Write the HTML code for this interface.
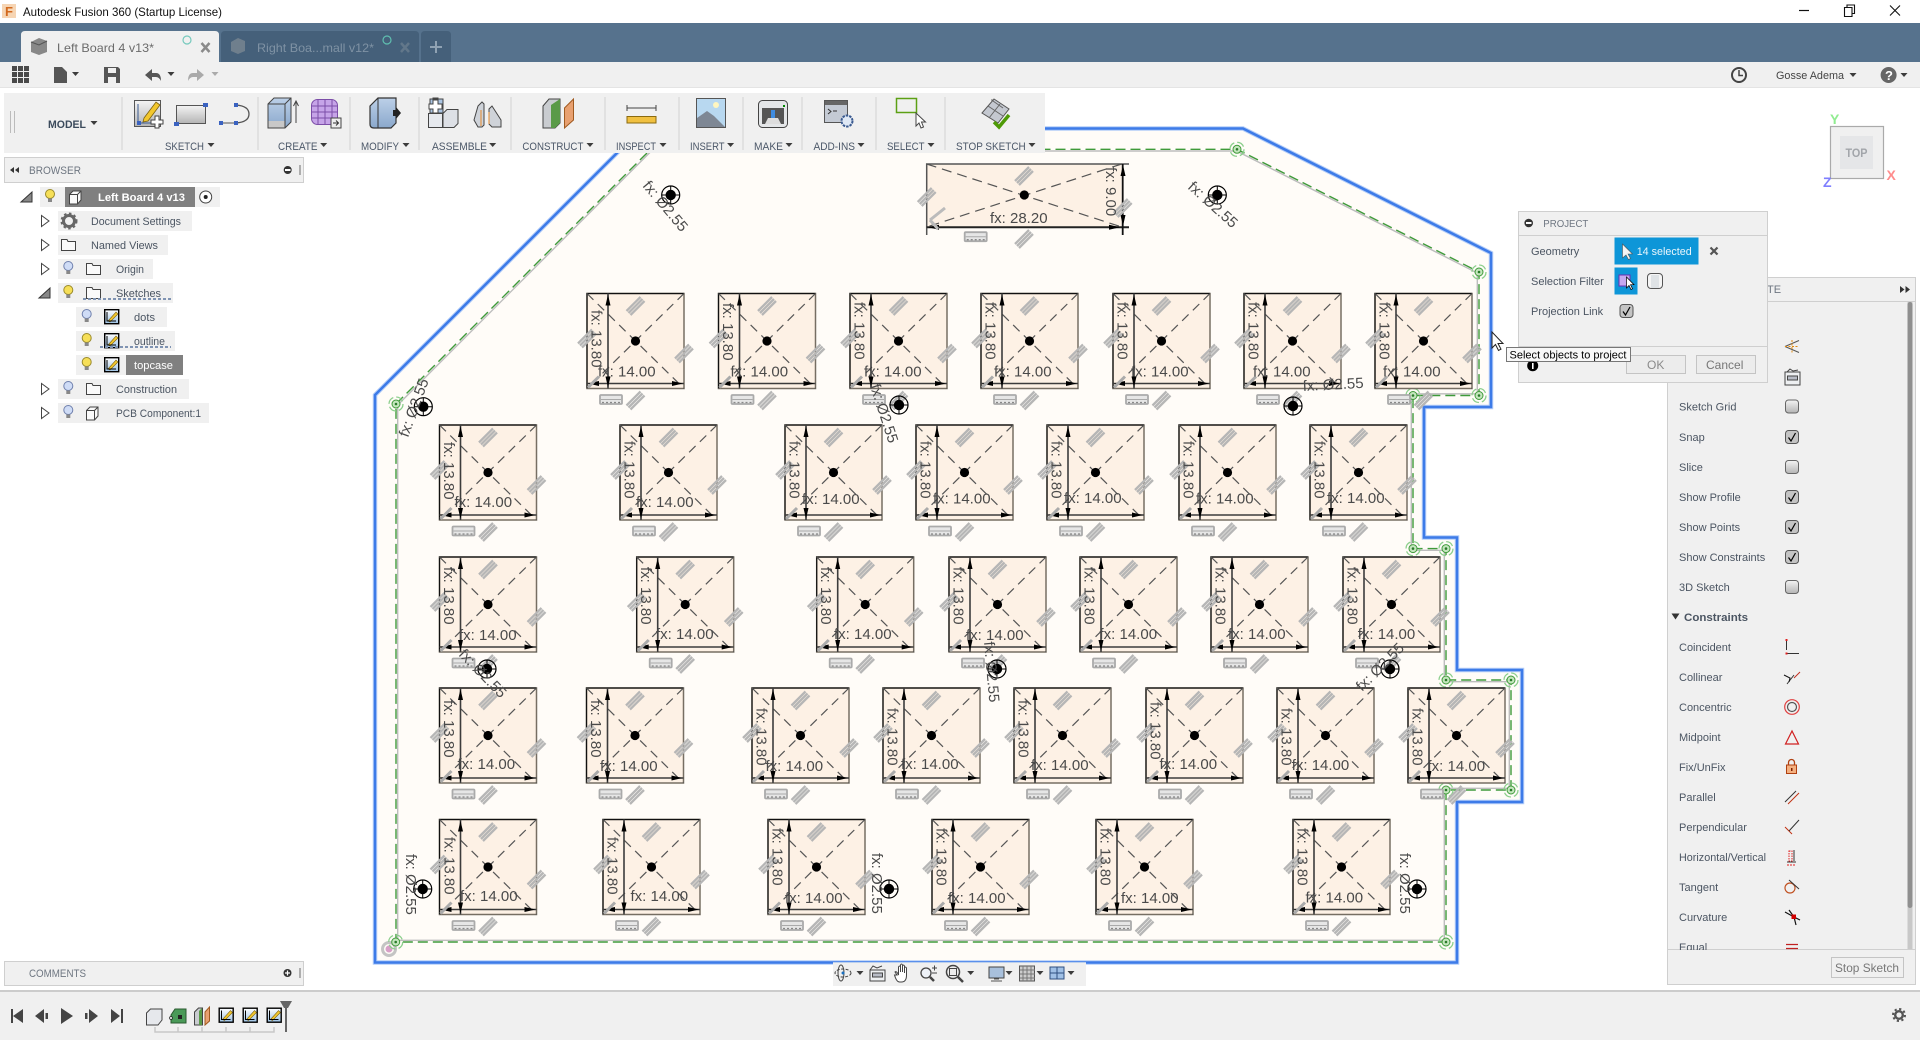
<!DOCTYPE html>
<html><head><meta charset="utf-8"><title>Autodesk Fusion 360</title>
<style>
html,body{margin:0;padding:0;background:#fff;overflow:hidden}
svg{display:block}
text{font-family:"Liberation Sans",sans-serif}
.t{font-size:11px;fill:#4b5562}
.r{font-size:11px;fill:#4b5768}
.d{font-size:15px;fill:#4a4a4a}
</style></head><body>
<svg width="1920" height="1040" viewBox="0 0 1920 1040" xmlns="http://www.w3.org/2000/svg">
<defs>
<linearGradient id="gc" x1="0" y1="0" x2="0" y2="1"><stop offset="0" stop-color="#f4f4f4"/><stop offset="1" stop-color="#b4b4b4"/></linearGradient>
<linearGradient id="gb" x1="0" y1="0" x2="0" y2="1"><stop offset="0" stop-color="#bcd0e8"/><stop offset="1" stop-color="#8aa8cc"/></linearGradient>
<linearGradient id="gs" x1="0" y1="0" x2="0" y2="1"><stop offset="0" stop-color="#fff"/><stop offset="1" stop-color="#9dc3e6"/></linearGradient>
<g id="p"><path d="M-9,5L5,-9M-7,7L7,-7M-5,9L9,-5" stroke="#b6b6b6" stroke-width="2.300" fill="none"/></g>
<g id="hz"><rect x="-11" y="-4.500" width="22" height="9" rx="1" fill="#e6e6e6" stroke="#aaa" stroke-width="1.800"/><path d="M-10,0H10" stroke="#aaa"/><path d="M-9,3h2M-5,3h2M-1,3h2M3,3h2M7,3h2" stroke="#888" stroke-width="1.300"/></g>
<g id="k">
<rect width="97" height="95" fill="#fdf1e5" stroke="#766e63" stroke-width="1.500"/>
<path d="M0,95V0H97" fill="none" stroke="#111" stroke-width="1.200"/>
<path d="M0,0L97,95M97,0L0,95" stroke="#555" stroke-width="1.200" stroke-dasharray="9 6" fill="none"/>
<circle cx="48.500" cy="47.500" r="4.600" fill="#000"/>
<path d="M21,0V95M0,90H97" stroke="#3c3c3c" stroke-width="1.600" fill="none"/>
<path d="M21,1l-2.500,11h5zM21,94l-2.500,-11h5zM96,90l-11,-2.500v5zM1,90l11,-2.500v5z" fill="#000"/>
<path d="M1,94L12,83" stroke="#aaa" stroke-width="3"/>
<use href="#p" x="48.500" y="12.500"/><use href="#p" x="0" y="45"/><use href="#p" x="97" y="60"/><use href="#p" x="48.500" y="107"/><use href="#hz" x="24" y="106"/>
</g>
<g id="h"><circle r="9" fill="none" stroke="#000" stroke-width="1.200"/><circle r="5.200" fill="#000"/><path d="M0,-9V9M-9,0H9" stroke="#000"/></g>
<g id="v"><circle r="7" fill="none" stroke="#8ccf8c" stroke-width="1.300" stroke-dasharray="8 3"/><circle r="4" fill="#c4e6bd" stroke="#3f9a3a"/><circle r="1.300" fill="#2a7a2a"/></g>
<path id="a" d="M-3.500,-2h7l-3.500,4z" fill="#3c3c3c"/>
<g id="by"><circle cy="-2" r="4.500" fill="#f6df58" stroke="#9a8a2a"/><rect x="-2" y="2.500" width="4" height="3.500" fill="#888"/></g>
<g id="bb"><circle cy="-2" r="4.500" fill="#cfdcf6" stroke="#6f80ad"/><rect x="-2" y="2.500" width="4" height="3.500" fill="#888"/></g>
<g id="f"><path d="M.5,.5H6l1,2h7.500V11.500H.5z" fill="#fafafa" stroke="#444"/></g>
<g id="sk"><rect x=".7" y=".7" width="14" height="14" fill="url(#gs)" stroke="#000" stroke-width="1.400"/><path d="M4,12L12,3l2,2L6,13z" fill="#f2c72e" stroke="#7a6010" stroke-width=".6"/><path d="M3,3V12H12" fill="none" stroke="#000"/></g>
<g id="ci"><path d="M.5,4.500L4,1H12V10L8.500,14H.5z" fill="#fafafa" stroke="#444"/><path d="M.5,4.500H8.500V14M8.500,4.500L12,1" fill="none" stroke="#444"/></g>
<g id="c0"><rect width="13" height="13" rx="3" fill="url(#gc)" stroke="#666"/></g>
<g id="c1"><rect width="13" height="13" rx="3" fill="#c4c4c4" stroke="#555"/><path d="M3,7l2.500,3.500L10,2.500" fill="none" stroke="#000" stroke-width="1.200"/></g>
<path id="t1" d="M.5,0V11L8,5.500z" fill="#fff" stroke="#444"/>
<path id="t2" d="M11,0V10H0z" fill="#888" stroke="#333"/>
</defs>

<rect width="1920" height="1040" fill="#fff"/>

<!-- canvas sketch -->
<path d="M375,395L641.500,128.500H1243L1491,253V407H1424V537.500H1457V670H1522V802H1457V962.500H375z" fill="#fffcf8" stroke="#b4cdf8" stroke-width="4.500"/>
<path d="M375,395L641.500,128.500H1243L1491,253V407H1424V537.500H1457V670H1522V802H1457V962.500H375z" fill="none" stroke="#3d7be8" stroke-width="2.500"/>
<path d="M397.700,405L651.400,151H1236.600L1477.300,273V393.800H1411.300V550.300H1444.300V681.700H1509.300V788.300H1444.300V940.300H397.700z" fill="none" stroke="#bdbdbd" stroke-width="1.400"/>
<path d="M396,404L650.700,149.300H1237L1479,272V395.500H1413V548.600H1446V680H1511V790H1446V942H396z" fill="none" stroke="#3f9a3a" stroke-width="1.400" stroke-dasharray="10 5"/>

<use href="#v" x="396" y="404"/><use href="#v" x="1237" y="149.300"/><use href="#v" x="1479" y="272"/><use href="#v" x="1479" y="395.500"/><use href="#v" x="1413" y="395.500"/><use href="#v" x="1413" y="548.600"/><use href="#v" x="1446" y="548.600"/><use href="#v" x="1446" y="680"/><use href="#v" x="1511" y="680"/><use href="#v" x="1511" y="790"/><use href="#v" x="1446" y="790"/><use href="#v" x="1446" y="942"/>
<circle cx="389" cy="949" r="6.500" fill="none" stroke="#c4c4c4" stroke-width="3"/><circle cx="389" cy="949" r="3.500" fill="#d8a0c8"/><use href="#v" x="395.700" y="942"/>

<!-- top rect -->
<rect x="926.700" y="164" width="195" height="63" fill="#fdf1e5"/>
<path d="M926.700,235V164H1129" fill="none" stroke="#555" stroke-width="1.500"/>
<path d="M926.700,164L1121.700,227M1121.700,164L926.700,227" stroke="#555" stroke-width="1.200" stroke-dasharray="10 6"/>
<path d="M926.700,227.300H1129" stroke="#222" stroke-width="2"/><path d="M1122.700,164V235" stroke="#111" stroke-width="1.800"/>
<path d="M928,227.300l11,-2.500v5zM1120,227.300l-11,-2.500v5zM1123,165l-2.500,11h5zM1123,226l-2.500,-11h5z" fill="#000"/>
<circle cx="1024.300" cy="195" r="4.600" fill="#000"/>
<use href="#p" x="1024" y="176"/><use href="#p" x="926.700" y="197"/><use href="#p" x="1122.700" y="208"/><use href="#p" x="1024" y="239"/><use href="#hz" x="975.700" y="236.700"/>
<path d="M930,220L945,208M930,220L938,229" stroke="#bbb" stroke-width="3"/>
<text class="d" x="990" y="223">fx: 28.20</text>
<text class="d" transform="translate(1106,167) rotate(90)">fx: 9.00</text>

<!-- Row 1 -->
<use href="#k" x="587" y="293.500"/><use href="#k" x="718.500" y="293.500"/><use href="#k" x="850" y="293.500"/><use href="#k" x="981" y="293.500"/><use href="#k" x="1113" y="293.500"/><use href="#k" x="1244" y="293.500"/><use href="#k" x="1375" y="293.500"/>
<!-- Row 2 -->
<use href="#k" x="439.500" y="425"/><use href="#k" x="620" y="425"/><use href="#k" x="785" y="425"/><use href="#k" x="916" y="425"/><use href="#k" x="1047" y="425"/><use href="#k" x="1179" y="425"/><use href="#k" x="1310" y="425"/>
<!-- Row 3 -->
<use href="#k" x="439.500" y="557"/><use href="#k" x="636.700" y="557"/><use href="#k" x="816.700" y="557"/><use href="#k" x="949" y="557"/><use href="#k" x="1080" y="557"/><use href="#k" x="1211" y="557"/><use href="#k" x="1343" y="557"/>
<!-- Row 4 -->
<use href="#k" x="439.500" y="688"/><use href="#k" x="586.500" y="688"/><use href="#k" x="752" y="688"/><use href="#k" x="883" y="688"/><use href="#k" x="1014" y="688"/><use href="#k" x="1146" y="688"/><use href="#k" x="1277" y="688"/><use href="#k" x="1408" y="688"/>
<!-- Row 5 -->
<use href="#k" x="439.500" y="819.500"/><use href="#k" x="603" y="819.500"/><use href="#k" x="768" y="819.500"/><use href="#k" x="932" y="819.500"/><use href="#k" x="1096" y="819.500"/><use href="#k" x="1293" y="819.500"/>

<!-- Labels row 1 -->
<text class="d" x="598" y="376.500">fx: 14.00</text><text class="d" transform="translate(591.500,310) rotate(90)">fx: 13.80</text>
<text class="d" x="730.500" y="376.500">fx: 14.00</text><text class="d" transform="translate(723,303) rotate(90)">fx: 13.80</text>
<text class="d" x="864" y="376.500">fx: 14.00</text><text class="d" transform="translate(854.500,302) rotate(90)">fx: 13.80</text>
<text class="d" x="994" y="376.500">fx: 14.00</text><text class="d" transform="translate(985.500,302) rotate(90)">fx: 13.80</text>
<text class="d" x="1131" y="376.500">fx: 14.00</text><text class="d" transform="translate(1117.500,302) rotate(90)">fx: 13.80</text>
<text class="d" x="1253" y="376.500">fx: 14.00</text><text class="d" transform="translate(1248.500,302) rotate(90)">fx: 13.80</text>
<text class="d" x="1383" y="376.500">fx: 14.00</text><text class="d" transform="translate(1379.500,302) rotate(90)">fx: 13.80</text>
<!-- Labels row 2 -->
<text class="d" x="454.500" y="507">fx: 14.00</text><text class="d" transform="translate(444,442) rotate(90)">fx: 13.80</text>
<text class="d" x="636" y="507">fx: 14.00</text><text class="d" transform="translate(624.500,441) rotate(90)">fx: 13.80</text>
<text class="d" x="802" y="504">fx: 14.00</text><text class="d" transform="translate(789.500,441) rotate(90)">fx: 13.80</text>
<text class="d" x="933" y="503.500">fx: 14.00</text><text class="d" transform="translate(920.500,441) rotate(90)">fx: 13.80</text>
<text class="d" x="1064" y="503">fx: 14.00</text><text class="d" transform="translate(1051.500,441) rotate(90)">fx: 13.80</text>
<text class="d" x="1196" y="503.500">fx: 14.00</text><text class="d" transform="translate(1183.500,441) rotate(90)">fx: 13.80</text>
<text class="d" x="1327" y="503">fx: 14.00</text><text class="d" transform="translate(1314.500,441) rotate(90)">fx: 13.80</text>
<!-- Labels row 3 -->
<text class="d" x="459" y="640">fx: 14.00</text><text class="d" transform="translate(444,567) rotate(90)">fx: 13.80</text>
<text class="d" x="656" y="639">fx: 14.00</text><text class="d" transform="translate(641,567) rotate(90)">fx: 13.80</text>
<text class="d" x="834" y="639">fx: 14.00</text><text class="d" transform="translate(821,567) rotate(90)">fx: 13.80</text>
<text class="d" x="966" y="640">fx: 14.00</text><text class="d" transform="translate(953.500,567) rotate(90)">fx: 13.80</text>
<text class="d" x="1099.500" y="639">fx: 14.00</text><text class="d" transform="translate(1084.500,567) rotate(90)">fx: 13.80</text>
<text class="d" x="1228" y="639">fx: 14.00</text><text class="d" transform="translate(1215.500,567) rotate(90)">fx: 13.80</text>
<text class="d" x="1357.700" y="639">fx: 14.00</text><text class="d" transform="translate(1347.500,567) rotate(90)">fx: 13.80</text>
<!-- Labels row 4 -->
<text class="d" x="457.500" y="769">fx: 14.00</text><text class="d" transform="translate(444,700) rotate(90)">fx: 13.80</text>
<text class="d" x="600" y="771">fx: 14.00</text><text class="d" transform="translate(591,700) rotate(90)">fx: 13.80</text>
<text class="d" x="765.500" y="771">fx: 14.00</text><text class="d" transform="translate(756.500,708) rotate(90)">fx: 13.80</text>
<text class="d" x="901" y="769">fx: 14.00</text><text class="d" transform="translate(887.500,708) rotate(90)">fx: 13.80</text>
<text class="d" x="1031" y="770">fx: 14.00</text><text class="d" transform="translate(1018.500,700) rotate(90)">fx: 13.80</text>
<text class="d" x="1159.500" y="769">fx: 14.00</text><text class="d" transform="translate(1150.500,702) rotate(90)">fx: 13.80</text>
<text class="d" x="1291.700" y="770">fx: 14.00</text><text class="d" transform="translate(1281.500,708) rotate(90)">fx: 13.80</text>
<text class="d" x="1427.500" y="771">fx: 14.00</text><text class="d" transform="translate(1412.500,708) rotate(90)">fx: 13.80</text>
<!-- Labels row 5 -->
<text class="d" x="460" y="901">fx: 14.00</text><text class="d" transform="translate(444.500,837) rotate(90)">fx: 13.80</text>
<text class="d" x="630.500" y="901">fx: 14.00</text><text class="d" transform="translate(607.500,837) rotate(90)">fx: 13.80</text>
<text class="d" x="785" y="903">fx: 14.00</text><text class="d" transform="translate(772.500,828) rotate(90)">fx: 13.80</text>
<text class="d" x="948" y="903">fx: 14.00</text><text class="d" transform="translate(936.500,828) rotate(90)">fx: 13.80</text>
<text class="d" x="1121" y="903">fx: 14.00</text><text class="d" transform="translate(1100.500,828) rotate(90)">fx: 13.80</text>
<text class="d" x="1305.500" y="902.500">fx: 14.00</text><text class="d" transform="translate(1297.500,828) rotate(90)">fx: 13.80</text>

<!-- Holes -->
<use href="#h" x="670.700" y="195"/><text class="d" transform="translate(642,186) rotate(50)">fx: Ø2.55</text>
<use href="#h" x="1217.300" y="195"/><text class="d" transform="translate(1187,188) rotate(42)">fx: Ø2.55</text>
<use href="#h" x="423.300" y="406.700"/><text class="d" transform="translate(408,438) rotate(-70)">fx: Ø2.55</text>
<use href="#h" x="899" y="405"/><text class="d" transform="translate(870,386) rotate(72)">fx: Ø2.55</text>
<use href="#h" x="1293" y="406"/><text class="d" transform="translate(1303,391) rotate(-3)">fx: Ø2.55</text>
<use href="#h" x="487" y="669"/><text class="d" transform="translate(458,655) rotate(46)">fx: Ø2.55</text>
<use href="#h" x="997" y="669"/><text class="d" transform="translate(984,642) rotate(85)">fx: Ø2.55</text>
<use href="#h" x="1390" y="669"/><text class="d" transform="translate(1362,692) rotate(-45)">fx: Ø2.55</text>
<use href="#h" x="422.700" y="889"/><text class="d" transform="translate(406,854) rotate(90)">fx: Ø2.55</text>
<use href="#h" x="889" y="889"/><text class="d" transform="translate(872,853) rotate(90)">fx: Ø2.55</text>
<use href="#h" x="1417" y="889"/><text class="d" transform="translate(1400,853) rotate(90)">fx: Ø2.55</text>

<!-- Title bar -->
<rect x="2" y="4" width="14" height="14" fill="#f6d5b4"/><text x="5" y="16" style="font-size:13px;font-weight:bold;fill:#d2691e">F</text>
<text x="23" y="16" style="font-size:12px;fill:#111" textLength="199" lengthAdjust="spacingAndGlyphs">Autodesk Fusion 360 (Startup License)</text>
<path d="M1799,10.500H1809" stroke="#111" stroke-width="1.200"/>
<path d="M1844.500,7.500h7.500v9h-7.500zM1847,7.500v-2.500h7.500v8.500h-2.500" fill="none" stroke="#111" stroke-width="1.100"/>
<path d="M1890,5.500L1900,15.500M1900,5.500L1890,15.500" stroke="#111" stroke-width="1.100"/>

<!-- Tabs -->
<rect y="23" width="1920" height="39" fill="#56728d"/>
<path d="M21,62V35q0,-4 4,-4H215q4,0 4,4V62z" fill="#f0f0f0"/>
<path d="M221,62V35q0,-4 4,-4H415q4,0 4,4V62z" fill="#45607a"/>
<path d="M421,62V35q0,-4 4,-4H447q4,0 4,4V62z" fill="#45607a"/>
<path d="M31,42l8,-4 8,3v11l-8,3 -8,-3z" fill="#888"/><path d="M31,42l8,3 8,-4" stroke="#555" fill="none"/>
<path d="M231,42l7,-4 7,3v10l-7,3 -7,-3z" fill="#6f7f8d"/>
<text x="57" y="52" style="font-size:12px;fill:#6b6b6b" textLength="97" lengthAdjust="spacingAndGlyphs">Left Board 4 v13*</text>
<text x="257" y="52" style="font-size:12px;fill:#7f92a4" textLength="117" lengthAdjust="spacingAndGlyphs">Right Boa...mall v12*</text>
<circle cx="187" cy="40" r="4" fill="none" stroke="#75c9bd" stroke-width="1.200"/>
<circle cx="387" cy="40" r="4" fill="none" stroke="#5fbfb0" stroke-width="1.200"/>
<path d="M201.500,43l8,9M209.500,43l-8,9" stroke="#8a8a8a" stroke-width="2.500"/>
<path d="M401,43l8,9M409,43l-8,9" stroke="#62778a" stroke-width="2.500"/>
<path d="M436,41v12M430,47h12" stroke="#8fa2b3" stroke-width="2"/>

<!-- Quick toolbar -->
<rect y="62" width="1920" height="26" fill="#f0f0f0"/><rect y="87" width="1920" height="1" fill="#e4e4e4"/>
<path d="M12,66h5v5h-5zM18,66h5v5h-5zM24,66h5v5h-5zM12,72h5v5h-5zM18,72h5v5h-5zM24,72h5v5h-5zM12,78h5v5h-5zM18,78h5v5h-5zM24,78h5v5h-5z" fill="#4a4a4a"/>
<path d="M54,67h8l5,5v11h-13z" fill="#555"/><use href="#a" x="75.500" y="74"/>
<path d="M104,67h14l2,2v14h-16z" fill="#555"/><rect x="108" y="68" width="8" height="5" fill="#f0f0f0"/><rect x="108" y="77" width="8" height="6" fill="#f0f0f0"/>
<path d="M145,75l7,-6v4h4q5,0 5,8q-2,-4 -5,-4h-4v4z" fill="#555"/><use href="#a" x="171" y="74"/>
<path d="M204,75l-7,-6v4h-4q-5,0 -5,8q2,-4 5,-4h4v4z" fill="#a9a9a9"/><path d="M-3.500,-2h7l-3.500,4z" transform="translate(215,74)" fill="#aaa"/>
<circle cx="1739" cy="75" r="7" fill="none" stroke="#444" stroke-width="2"/><path d="M1739,70v5.500h4" fill="none" stroke="#444" stroke-width="1.500"/>
<text x="1776" y="79" style="font-size:11px;fill:#444" textLength="68" lengthAdjust="spacingAndGlyphs">Gosse Adema</text><use href="#a" x="1853" y="75"/>
<circle cx="1888.600" cy="75" r="8" fill="#666"/><text x="1885" y="80" style="font-size:13px;font-weight:bold;fill:#fff">?</text><use href="#a" x="1904" y="75"/>

<!-- Ribbon -->
<rect x="4" y="93" width="1041" height="60" fill="#f0f0f0"/>
<path d="M10.500,111V133M14.500,111V133" stroke="#bbb"/>
<path d="M122,97V150M258,97V150M350,97V150M419,97V150M511,97V150M605,97V150M679,97V150M743,97V150M802,97V150M876,97V150M945,97V150" stroke="#dcdcdc" stroke-width="1.500"/>
<text x="48" y="128" style="font-size:11px;font-weight:bold;fill:#3b4a5c" textLength="38" lengthAdjust="spacingAndGlyphs">MODEL</text><use href="#a" x="94" y="123"/>
<text class="r" x="165" y="150" textLength="39" lengthAdjust="spacingAndGlyphs">SKETCH</text><use href="#a" x="211" y="145"/>
<text class="r" x="278" y="150" textLength="39.500" lengthAdjust="spacingAndGlyphs">CREATE</text><use href="#a" x="323.700" y="145"/>
<text class="r" x="361" y="150" textLength="38" lengthAdjust="spacingAndGlyphs">MODIFY</text><use href="#a" x="406" y="145"/>
<text class="r" x="432" y="150" textLength="55" lengthAdjust="spacingAndGlyphs">ASSEMBLE</text><use href="#a" x="492.700" y="145"/>
<text class="r" x="522.400" y="150" textLength="61" lengthAdjust="spacingAndGlyphs">CONSTRUCT</text><use href="#a" x="590" y="145"/>
<text class="r" x="616" y="150" textLength="40" lengthAdjust="spacingAndGlyphs">INSPECT</text><use href="#a" x="663" y="145"/>
<text class="r" x="690" y="150" textLength="34.500" lengthAdjust="spacingAndGlyphs">INSERT</text><use href="#a" x="730.600" y="145"/>
<text class="r" x="754" y="150" textLength="29" lengthAdjust="spacingAndGlyphs">MAKE</text><use href="#a" x="789" y="145"/>
<text class="r" x="813.500" y="150" textLength="41.500" lengthAdjust="spacingAndGlyphs">ADD-INS</text><use href="#a" x="861" y="145"/>
<text class="r" x="887" y="150" textLength="37.500" lengthAdjust="spacingAndGlyphs">SELECT</text><use href="#a" x="931" y="145"/>
<text class="r" x="956" y="150" textLength="69.700" lengthAdjust="spacingAndGlyphs">STOP SKETCH</text><use href="#a" x="1032" y="145"/>

<!-- ribbon icons -->
<rect x="134.500" y="100.500" width="26" height="26" fill="url(#gc)" stroke="#555"/>
<path d="M138,104V123H156" fill="none" stroke="#3a5a90"/><rect x="137" y="121" width="4" height="4" fill="#3a62c0"/>
<path d="M144,118L156,102l4,3L148,121l-5,1z" fill="#f2c72e" stroke="#7a6010" stroke-width=".8"/>
<path d="M151,120h4v-4h4v4h4v4h-4v4h-4v-4h-4z" fill="#fff" stroke="#444"/>
<rect x="176.500" y="105.500" width="29" height="18" fill="url(#gc)" stroke="#555"/><path d="M174,122h5v4h-5zM203,103h5v4h-5z" fill="#3a62c0"/>
<path d="M220,123H236" stroke="#555"/><path d="M236,105Q249,106 249,114T236,123" fill="none" stroke="#555" stroke-width="1.300"/><path d="M219,121h4v4h-4zM234,121h4v4h-4zM234,103h4v4h-4z" fill="#3a62c0"/>
<path d="M268,104l6,-6h17v24l-6,6h-17z" fill="url(#gb)" stroke="#444"/><path d="M268,104h17v24M285,104l6,-6" fill="none" stroke="#444"/><rect x="268.500" y="121" width="16" height="6.500" fill="#c8c8c8"/>
<path d="M296,123V102M293.500,106l2.500,-5 2.500,5" fill="none" stroke="#444"/>
<rect x="311.500" y="99.500" width="26" height="25" rx="6" fill="#c6a4e8" stroke="#7c4ea8"/><path d="M318,100V124M325,100V124M332,100V124M312,106H337M312,112H337M312,118H337" stroke="#7c4ea8"/>
<rect x="331" y="118" width="10" height="10" fill="#eee" stroke="#444"/><path d="M333,123h5M336,120.500l2.500,2.500 -2.500,2.500" fill="none" stroke="#333"/>
<path d="M370,106l8,-8h18v25l-5,5h-17q-4,0 -4,-4z" fill="url(#gb)" stroke="#333" stroke-width="1.200"/><path d="M378,98V128" stroke="#333"/><path d="M393,110h3v-3l5,6 -5,6v-3h-3z" fill="#222"/>
<rect x="428.500" y="113.500" width="14" height="14" fill="#e6e9ee" stroke="#444"/><path d="M443,113.500l4,-4h11v14l-4,4h-11z" fill="#dde0e6" stroke="#444"/><path d="M430,99h13v14h-13z" fill="#aac4e2" stroke="#444"/><path d="M433,99h5v-1h-5zM429,104h4v-4h5v4h4v5h-4v4h-5v-4h-4z" fill="#fff" stroke="#444"/>
<path d="M474,120l4,-14 4,-4 2,2v21l-2,2h-4zM492,127l-3,-3V109l3,-3 9,14v7z" fill="#cfd3d9" stroke="#444"/><path d="M481,110v16M489,112v12" stroke="#e58a2a"/>
<path d="M543,106l6,-7h11v24l-5,5h-12z" fill="#c9ccd0" stroke="#444"/><path d="M551,105l9,-6v24l-5,5h-4z" fill="#5a9a48"/>
<path d="M564.500,108l9,-9v21l-9,8z" fill="#e8a070" stroke="#a05a20"/>
<path d="M627,108H656M627,105v6M656,105v6" stroke="#444"/><rect x="627" y="116.500" width="29" height="6.500" fill="#f0c040" stroke="#8a6a10"/>
<rect x="696.500" y="98.500" width="29" height="29" fill="#b8d8f0" stroke="#555"/><path d="M697,127V118l10,-7 7,5 11,11z" fill="#7e8794"/><circle cx="716" cy="105" r="3" fill="#fff6c0"/>
<rect x="758.500" y="100.500" width="29" height="27" rx="4" fill="#e4e6e8" stroke="#444"/><rect x="762" y="108" width="22" height="16" fill="#555"/><rect x="771" y="110" width="4" height="8" fill="#3f8ce0"/><path d="M765,124l3,-6h10l3,6z" fill="#ddd"/><rect x="783" y="105" width="2" height="2" fill="#080"/>
<rect x="824.500" y="100.500" width="23" height="22" fill="#c4cad4" stroke="#555"/><rect x="825" y="101" width="22" height="4" fill="#666"/><path d="M828,109l3,2.500 -3,2.500M833,111h4" fill="none" stroke="#333"/><circle cx="847" cy="121" r="5.500" fill="#dfe8f5" stroke="#3a5a90" stroke-width="2" stroke-dasharray="2.500 1"/>
<rect x="896.500" y="98.500" width="20" height="14" fill="none" stroke="#5ca014" stroke-width="1.500"/>
<path d="M916,113v13l3,-3 2,5 2.500,-1 -2,-5h4z" fill="#fff" stroke="#444"/>
<path d="M982,113l12,-14 15,10 -11,14z" fill="#c4c8d0" stroke="#555"/><path d="M988,106l15,10M994,100l-3,0M1000,104l-11,14M993,101l10,7" stroke="#666"/>
<path d="M994,122l5,5 10,-12" fill="none" stroke="#4e9a06" stroke-width="3.500"/>

<!-- Browser -->
<rect x="4.500" y="157.500" width="299" height="25" fill="#f0f0f0" stroke="#cfcfcf"/>
<path d="M14,167v6l-4,-3zM19,167v6l-4,-3z" fill="#333"/>
<text x="29" y="174" style="font-size:11px;fill:#6e7681" textLength="52" lengthAdjust="spacingAndGlyphs">BROWSER</text>
<circle cx="287.700" cy="170" r="4" fill="#333"/><rect x="285" y="169" width="5.500" height="2" fill="#fff"/><path d="M300,165V175" stroke="#999" stroke-width="1.500"/>
<g fill="#f0f0f0"><rect x="40" y="187" width="180" height="20"/><rect x="58" y="211" width="134" height="20"/><rect x="58" y="235" width="110" height="20"/><rect x="58" y="259" width="95" height="20"/><rect x="58" y="283" width="115" height="20"/><rect x="76" y="307" width="91" height="20"/><rect x="76" y="331" width="99" height="20"/><rect x="76" y="355" width="107" height="20"/><rect x="58" y="379" width="131" height="20"/><rect x="58" y="403" width="151" height="20"/></g>
<rect x="65" y="187" width="130" height="20" fill="#808080"/><rect x="126" y="355" width="57" height="20" fill="#808080"/>
<use href="#t2" x="21" y="192"/><use href="#t1" x="41" y="215.500"/><use href="#t1" x="41" y="239.500"/><use href="#t1" x="41" y="263.500"/><use href="#t2" x="39" y="288"/><use href="#t1" x="41" y="383.500"/><use href="#t1" x="41" y="407.500"/>
<use href="#by" x="50" y="196"/><use href="#ci" x="69" y="190"/>
<circle cx="205.700" cy="197" r="6" fill="#fff" stroke="#444"/><circle cx="205.700" cy="197" r="2" fill="#222"/>
<circle cx="69" cy="221" r="5.500" fill="none" stroke="#666" stroke-width="3"/><circle cx="69" cy="221" r="7.500" fill="none" stroke="#666" stroke-width="2" stroke-dasharray="2.500 2.500"/>
<use href="#f" x="61" y="239"/><use href="#bb" x="68.300" y="268"/><use href="#f" x="86" y="263"/><use href="#by" x="68.300" y="292"/><use href="#f" x="86" y="287"/>
<use href="#bb" x="86.700" y="316"/><use href="#sk" x="104" y="309"/><use href="#by" x="86.700" y="340"/><use href="#sk" x="104" y="333"/><use href="#by" x="86.700" y="364"/><use href="#sk" x="104" y="357"/>
<use href="#bb" x="68.300" y="388"/><use href="#f" x="86" y="383"/><use href="#bb" x="68.300" y="412"/><use href="#ci" x="86" y="406"/>
<path d="M83,299H172M100,347H171" stroke="#7f93b2" stroke-width="2" stroke-dasharray="3 2"/>
<text x="98" y="201" style="font-size:11px;font-weight:bold;fill:#fff" textLength="87" lengthAdjust="spacingAndGlyphs">Left Board 4 v13</text>
<text class="t" x="91" y="225" textLength="90" lengthAdjust="spacingAndGlyphs">Document Settings</text>
<text class="t" x="91" y="249" textLength="67" lengthAdjust="spacingAndGlyphs">Named Views</text>
<text class="t" x="116" y="273" textLength="28" lengthAdjust="spacingAndGlyphs">Origin</text>
<text class="t" x="116" y="297" textLength="45" lengthAdjust="spacingAndGlyphs">Sketches</text>
<text class="t" x="134" y="321" textLength="21" lengthAdjust="spacingAndGlyphs">dots</text>
<text class="t" x="134" y="345" textLength="31" lengthAdjust="spacingAndGlyphs">outline</text>
<text x="134" y="369" style="font-size:11px;fill:#fff" textLength="39" lengthAdjust="spacingAndGlyphs">topcase</text>
<text class="t" x="116" y="393" textLength="61" lengthAdjust="spacingAndGlyphs">Construction</text>
<text class="t" x="116" y="417" textLength="85" lengthAdjust="spacingAndGlyphs">PCB Component:1</text>

<!-- Comments -->
<rect x="4.500" y="961.500" width="299" height="24" fill="#f0f0f0" stroke="#cfcfcf"/>
<text x="29" y="977" style="font-size:11px;fill:#6e7681" textLength="57" lengthAdjust="spacingAndGlyphs">COMMENTS</text>
<circle cx="287.500" cy="973" r="4" fill="#333"/><path d="M285,973h5M287.500,970.500v5" stroke="#fff" stroke-width="1.200"/><path d="M300,968V978" stroke="#999" stroke-width="1.500"/>

<!-- Nav cube -->
<rect x="1830.500" y="126.500" width="53" height="52" fill="#f0f0f0" stroke="#aaa" stroke-width="1.200"/>
<rect x="1840" y="136" width="33" height="33" fill="#e5e6e8"/>
<text x="1845.500" y="157" style="font-size:12px;font-weight:bold;fill:#a2a5aa" textLength="22" lengthAdjust="spacingAndGlyphs">TOP</text>
<text x="1830" y="124" style="font-size:14px;font-weight:bold;fill:#90ec90">Y</text>
<text x="1886.500" y="180" style="font-size:14px;font-weight:bold;fill:#ff8c8c">X</text>
<text x="1823" y="187" style="font-size:14px;font-weight:bold;fill:#7f7fff">Z</text>

<!-- Palette -->
<rect x="1667.500" y="277.500" width="248" height="707" fill="#f0f0f0" stroke="#cfcfcf"/>
<path d="M1668,301.500H1915M1668,949.500H1915" stroke="#cfcfcf"/>
<text x="1767" y="293" style="font-size:11px;fill:#6e7681">TE</text>
<path d="M1900,286v7l4.500,-3.500zM1905.500,286v7l4.500,-3.500z" fill="#333"/>
<rect x="1907.500" y="302" width="5" height="647" fill="#c8c8c8"/><rect x="1907.500" y="302" width="5" height="606" rx="2.500" fill="#8f8f8f"/>
<path d="M1785,346.500l14,-6M1785,346.500l14,6" stroke="#555" fill="none"/><path d="M1785,346.500h14M1792,340v13" stroke="#e08a10" stroke-dasharray="2 1.500" fill="none"/>
<rect x="1785" y="372" width="15" height="13" fill="#eef0f2" stroke="#444"/><rect x="1787.500" y="376" width="10" height="4" fill="#b8bcc6" stroke="#444"/><path d="M1787,372l3,-3 3,2 5,-1" stroke="#444" fill="none"/>
<text class="t" x="1679" y="410.500">Sketch Grid</text><use href="#c0" x="1785.500" y="400"/>
<text class="t" x="1679" y="441">Snap</text><use href="#c1" x="1785.500" y="430.500"/>
<text class="t" x="1679" y="471">Slice</text><use href="#c0" x="1785.500" y="460.500"/>
<text class="t" x="1679" y="501">Show Profile</text><use href="#c1" x="1785.500" y="490.500"/>
<text class="t" x="1679" y="531">Show Points</text><use href="#c1" x="1785.500" y="520.500"/>
<text class="t" x="1679" y="561">Show Constraints</text><use href="#c1" x="1785.500" y="550.500"/>
<text class="t" x="1679" y="591">3D Sketch</text><use href="#c0" x="1785.500" y="580.500"/>
<path d="M1671.500,613.500h8l-4,6z" fill="#333"/>
<text x="1684" y="621" style="font-size:11px;font-weight:bold;fill:#4b5562" textLength="64" lengthAdjust="spacingAndGlyphs">Constraints</text>
<text class="t" x="1679" y="651">Coincident</text>
<text class="t" x="1679" y="681">Collinear</text>
<text class="t" x="1679" y="711">Concentric</text>
<text class="t" x="1679" y="741">Midpoint</text>
<text class="t" x="1679" y="771">Fix/UnFix</text>
<text class="t" x="1679" y="801">Parallel</text>
<text class="t" x="1679" y="831">Perpendicular</text>
<text class="t" x="1679" y="861" textLength="87" lengthAdjust="spacingAndGlyphs">Horizontal/Vertical</text>
<text class="t" x="1679" y="891">Tangent</text>
<text class="t" x="1679" y="921">Curvature</text>
<text class="t" x="1679" y="951">Equal</text>
<path d="M1786.500,640V650M1786.500,653.500H1799" stroke="#333"/><rect x="1785.500" y="639" width="2" height="2" fill="#e02020"/><rect x="1785.500" y="652.500" width="2" height="2" fill="#e02020"/>
<path d="M1787,684L1794,675" stroke="#333"/><path d="M1794,678L1800,672" stroke="#c03020"/><path d="M1784,675l6,3 -1,4" fill="none" stroke="#111"/>
<circle cx="1792" cy="707" r="7.300" fill="none" stroke="#e04040" stroke-width="1.200"/><circle cx="1792" cy="707" r="4.500" fill="none" stroke="#555" stroke-width="1.200"/>
<path d="M1792,731L1785.500,744H1798.500z" fill="none" stroke="#d02020" stroke-width="1.200"/>
<rect x="1786.500" y="765" width="10" height="8.500" fill="#f4b080" stroke="#b04010"/><path d="M1788.500,765v-2.500a3,3 0 0 1 6,0V765" fill="none" stroke="#b04010" stroke-width="1.300"/><rect x="1791" y="768" width="1.500" height="3" fill="#802000"/>
<path d="M1785,802L1796,791" stroke="#333"/><path d="M1788,804L1799,793" stroke="#c03010"/>
<path d="M1785,827l7,7" stroke="#c03010"/><path d="M1789,831L1799,820" stroke="#333"/>
<path d="M1789,851h3v10h-3z" fill="none" stroke="#e02020" stroke-dasharray="1.500 1"/><path d="M1794,850V861M1787,862H1796" stroke="#333"/><path d="M1787,865H1796" stroke="#e02020" stroke-dasharray="2 1"/>
<circle cx="1790" cy="888" r="5" fill="none" stroke="#c05020" stroke-width="1.200"/><path d="M1789,880L1799,889" stroke="#333"/>
<path d="M1785,912L1794,917L1796,925M1789,910l5,7 6,3" fill="none" stroke="#111" stroke-width="1.200"/><rect x="1791.500" y="914.500" width="4.500" height="4.500" fill="#d00000"/>
<path d="M1786,944.500H1798M1786,948.500H1798" stroke="#c02020" stroke-width="1.200"/>
<rect x="1668" y="950" width="247" height="34" fill="#f0f0f0"/>
<rect x="1831.500" y="957.500" width="72" height="20" fill="#f0f0f0" stroke="#c4c4c4"/>
<text x="1835" y="972" style="font-size:12px;fill:#777" textLength="64" lengthAdjust="spacingAndGlyphs">Stop Sketch</text>

<!-- Project dialog -->
<rect x="1518.500" y="211.500" width="249" height="171" fill="#f0f0f0" stroke="#cfcfcf"/>
<path d="M1519,235.500H1767M1519,346.500H1767" stroke="#cfcfcf"/>
<circle cx="1528.700" cy="223" r="4.300" fill="#333"/><rect x="1526" y="222" width="5.500" height="2" fill="#fff"/>
<text x="1543.300" y="227" style="font-size:10px;fill:#6e7681" textLength="45" lengthAdjust="spacingAndGlyphs">PROJECT</text>
<text class="t" x="1531" y="255">Geometry</text><text class="t" x="1531" y="285">Selection Filter</text><text class="t" x="1531" y="315">Projection Link</text>
<rect x="1614.500" y="237.500" width="84" height="27" fill="#0e96d8"/>
<path d="M1622.500,244v14l3.500,-3 2.500,4.500 2,-1 -2.500,-4.500h4.500z" fill="#f4f4f4" stroke="#555" stroke-width=".6"/>
<text x="1636.700" y="255" style="font-size:11px;fill:#eaf6fc" textLength="55" lengthAdjust="spacingAndGlyphs">14 selected</text>
<path d="M1710.500,247.500l7,7M1717.500,247.500l-7,7" stroke="#555" stroke-width="2.200"/>
<rect x="1614.500" y="267.500" width="23" height="27" fill="#0e96d8"/>
<rect x="1619" y="275" width="11" height="11" fill="#c4a8f0" stroke="#6a2fb0"/>
<path d="M1626.500,277v11l2.500,-2.500 2,4 1.500,-.8 -2,-4h3.500z" fill="#fff" stroke="#000" stroke-width=".7"/>
<rect x="1647.500" y="273.500" width="15" height="15" rx="3.500" fill="#f5f5f5" stroke="#555"/><path d="M1651,275h8v13h-8z" fill="#dfe3e6"/>
<use href="#c1" x="1620" y="304.500"/>
<rect x="1626.500" y="355.500" width="59" height="18" fill="#ececec" stroke="#c4c4c4"/><text x="1647" y="369" style="font-size:12px;fill:#8a8a8a">OK</text>
<rect x="1696.500" y="355.500" width="59" height="18" fill="#ececec" stroke="#c4c4c4"/><text x="1706" y="369" style="font-size:12px;fill:#777">Cancel</text>
<circle cx="1532.700" cy="365.700" r="5.500" fill="#000"/><rect x="1532" y="363" width="1.600" height="6" fill="#fff"/>
<rect x="1506.500" y="347.500" width="124" height="14" fill="#f8f8f8" stroke="#777"/>
<text x="1509.500" y="358.500" style="font-size:11px;fill:#000" textLength="117" lengthAdjust="spacingAndGlyphs">Select objects to project</text>
<path d="M1492,332v16l3.500,-3.500 3,6 2.500,-1.300 -3,-5.700h5z" fill="#fff" stroke="#222"/>

<!-- Bottom nav -->
<rect x="833" y="962" width="253" height="24" fill="#f0f0f0"/><path d="M833,962.500H1086" stroke="#bcd0ec"/>
<ellipse cx="843" cy="973" rx="8" ry="4" fill="none" stroke="#444" stroke-dasharray="3 1.500"/><ellipse cx="841" cy="973" rx="3" ry="8" fill="none" stroke="#444"/><circle cx="843" cy="973" r="1.500" fill="#1a70c0"/><use href="#a" x="860" y="973"/>
<rect x="870" y="970" width="15" height="11" fill="#eef0f2" stroke="#444"/><rect x="872.500" y="973" width="10" height="4" fill="#b8bcc6" stroke="#444"/><path d="M870,970l3,-4 4,2 5,-2" stroke="#444" fill="none"/>
<path d="M897,975l-2,-3q1,-1 2.500,1l1,2V967q1,-2 2,0v5V965q1,-2 2,0v7V966q1,-2 2,0v7V968q1,-2 2,0v7q0,7 -5,7h-2q-3,0 -5,-7z" fill="#fff" stroke="#444"/>
<circle cx="926" cy="973" r="5" fill="#eef2f8" stroke="#444" stroke-width="1.300"/><path d="M930,977l4,4" stroke="#444" stroke-width="2.500"/><path d="M932,968h5M934.500,965.500v5M932,973h5" stroke="#444"/>
<circle cx="953" cy="972" r="6.500" fill="#eee" stroke="#444" stroke-width="1.500"/><rect x="949.500" y="968.500" width="7" height="7" fill="none" stroke="#444"/><path d="M958,977l5,5" stroke="#444" stroke-width="2.500"/><use href="#a" x="970.700" y="973"/>
<rect x="989" y="967" width="15" height="11" fill="#a8c0dc" stroke="#444"/><path d="M994,979h5M991,981h11" stroke="#555"/><use href="#a" x="1009" y="973"/>
<rect x="1019.500" y="966" width="15" height="15" fill="#ccc" stroke="#555"/><path d="M1023,966v15M1027,966v15M1031,966v15M1020,970h15M1020,974h15M1020,978h15" stroke="#777"/><use href="#a" x="1040" y="973"/>
<rect x="1050" y="967" width="14" height="12" fill="#9fc0e6" stroke="#2f4f80"/><path d="M1057,967v12M1050,973h14" stroke="#2f4f80"/><use href="#a" x="1071" y="973"/>

<!-- Timeline -->
<rect y="991" width="1920" height="49" fill="#f0f0f0"/><rect y="990" width="1920" height="2" fill="#ccc"/>
<g fill="#444">
<path d="M11,1009h2v14h-2zM23,1009v14l-10,-7z"/>
<path d="M44,1009v14l-9,-7zM45.500,1013h2.500v6h-2.500z"/>
<path d="M61,1008l12,8 -12,8z"/>
<path d="M85,1013h2.500v6h-2.500zM89,1009l9,7 -9,7z"/>
<path d="M111,1009l9,7 -9,7zM121,1009h2v14h-2z"/>
</g>
<path d="M146.500,1013l4,-4H162v11l-4,5h-11.500z" fill="#e6e8ec" stroke="#444"/>
<path d="M171,1015l4,-6h11v14H171z" fill="#4a9a58" stroke="#2a5a30"/><rect x="178" y="1015" width="4" height="4" fill="#222"/><circle cx="171" cy="1018" r="1.500" fill="#ddd" stroke="#222" stroke-width=".7"/>
<path d="M194.500,1012l4,-4h4v17h-8z" fill="#c9ccd0" stroke="#444"/><path d="M199,1011l3,-3v17h-3z" fill="#5a9a48"/><path d="M205,1012l4.500,-5v14l-4.500,4z" fill="#e8a070" stroke="#a05a20"/>
<use href="#sk" x="218.500" y="1007.500"/><use href="#sk" x="242.500" y="1007.500"/><use href="#sk" x="266.500" y="1007.500"/>
<path d="M155,1027v5H274V1027M178,1027v5M202,1027v5M226,1027v5M250,1027v5" fill="none" stroke="#c8c8c8" stroke-width="1.500"/>
<path d="M280,1001H292L288,1008H284z" fill="#666"/><rect x="285" y="1005" width="2" height="27" fill="#666"/>
<circle cx="1899" cy="1015" r="3.800" fill="none" stroke="#555" stroke-width="2.400"/><circle cx="1899" cy="1015" r="6" fill="none" stroke="#555" stroke-width="2" stroke-dasharray="2.200 2.500"/>
</svg>
</body></html>
